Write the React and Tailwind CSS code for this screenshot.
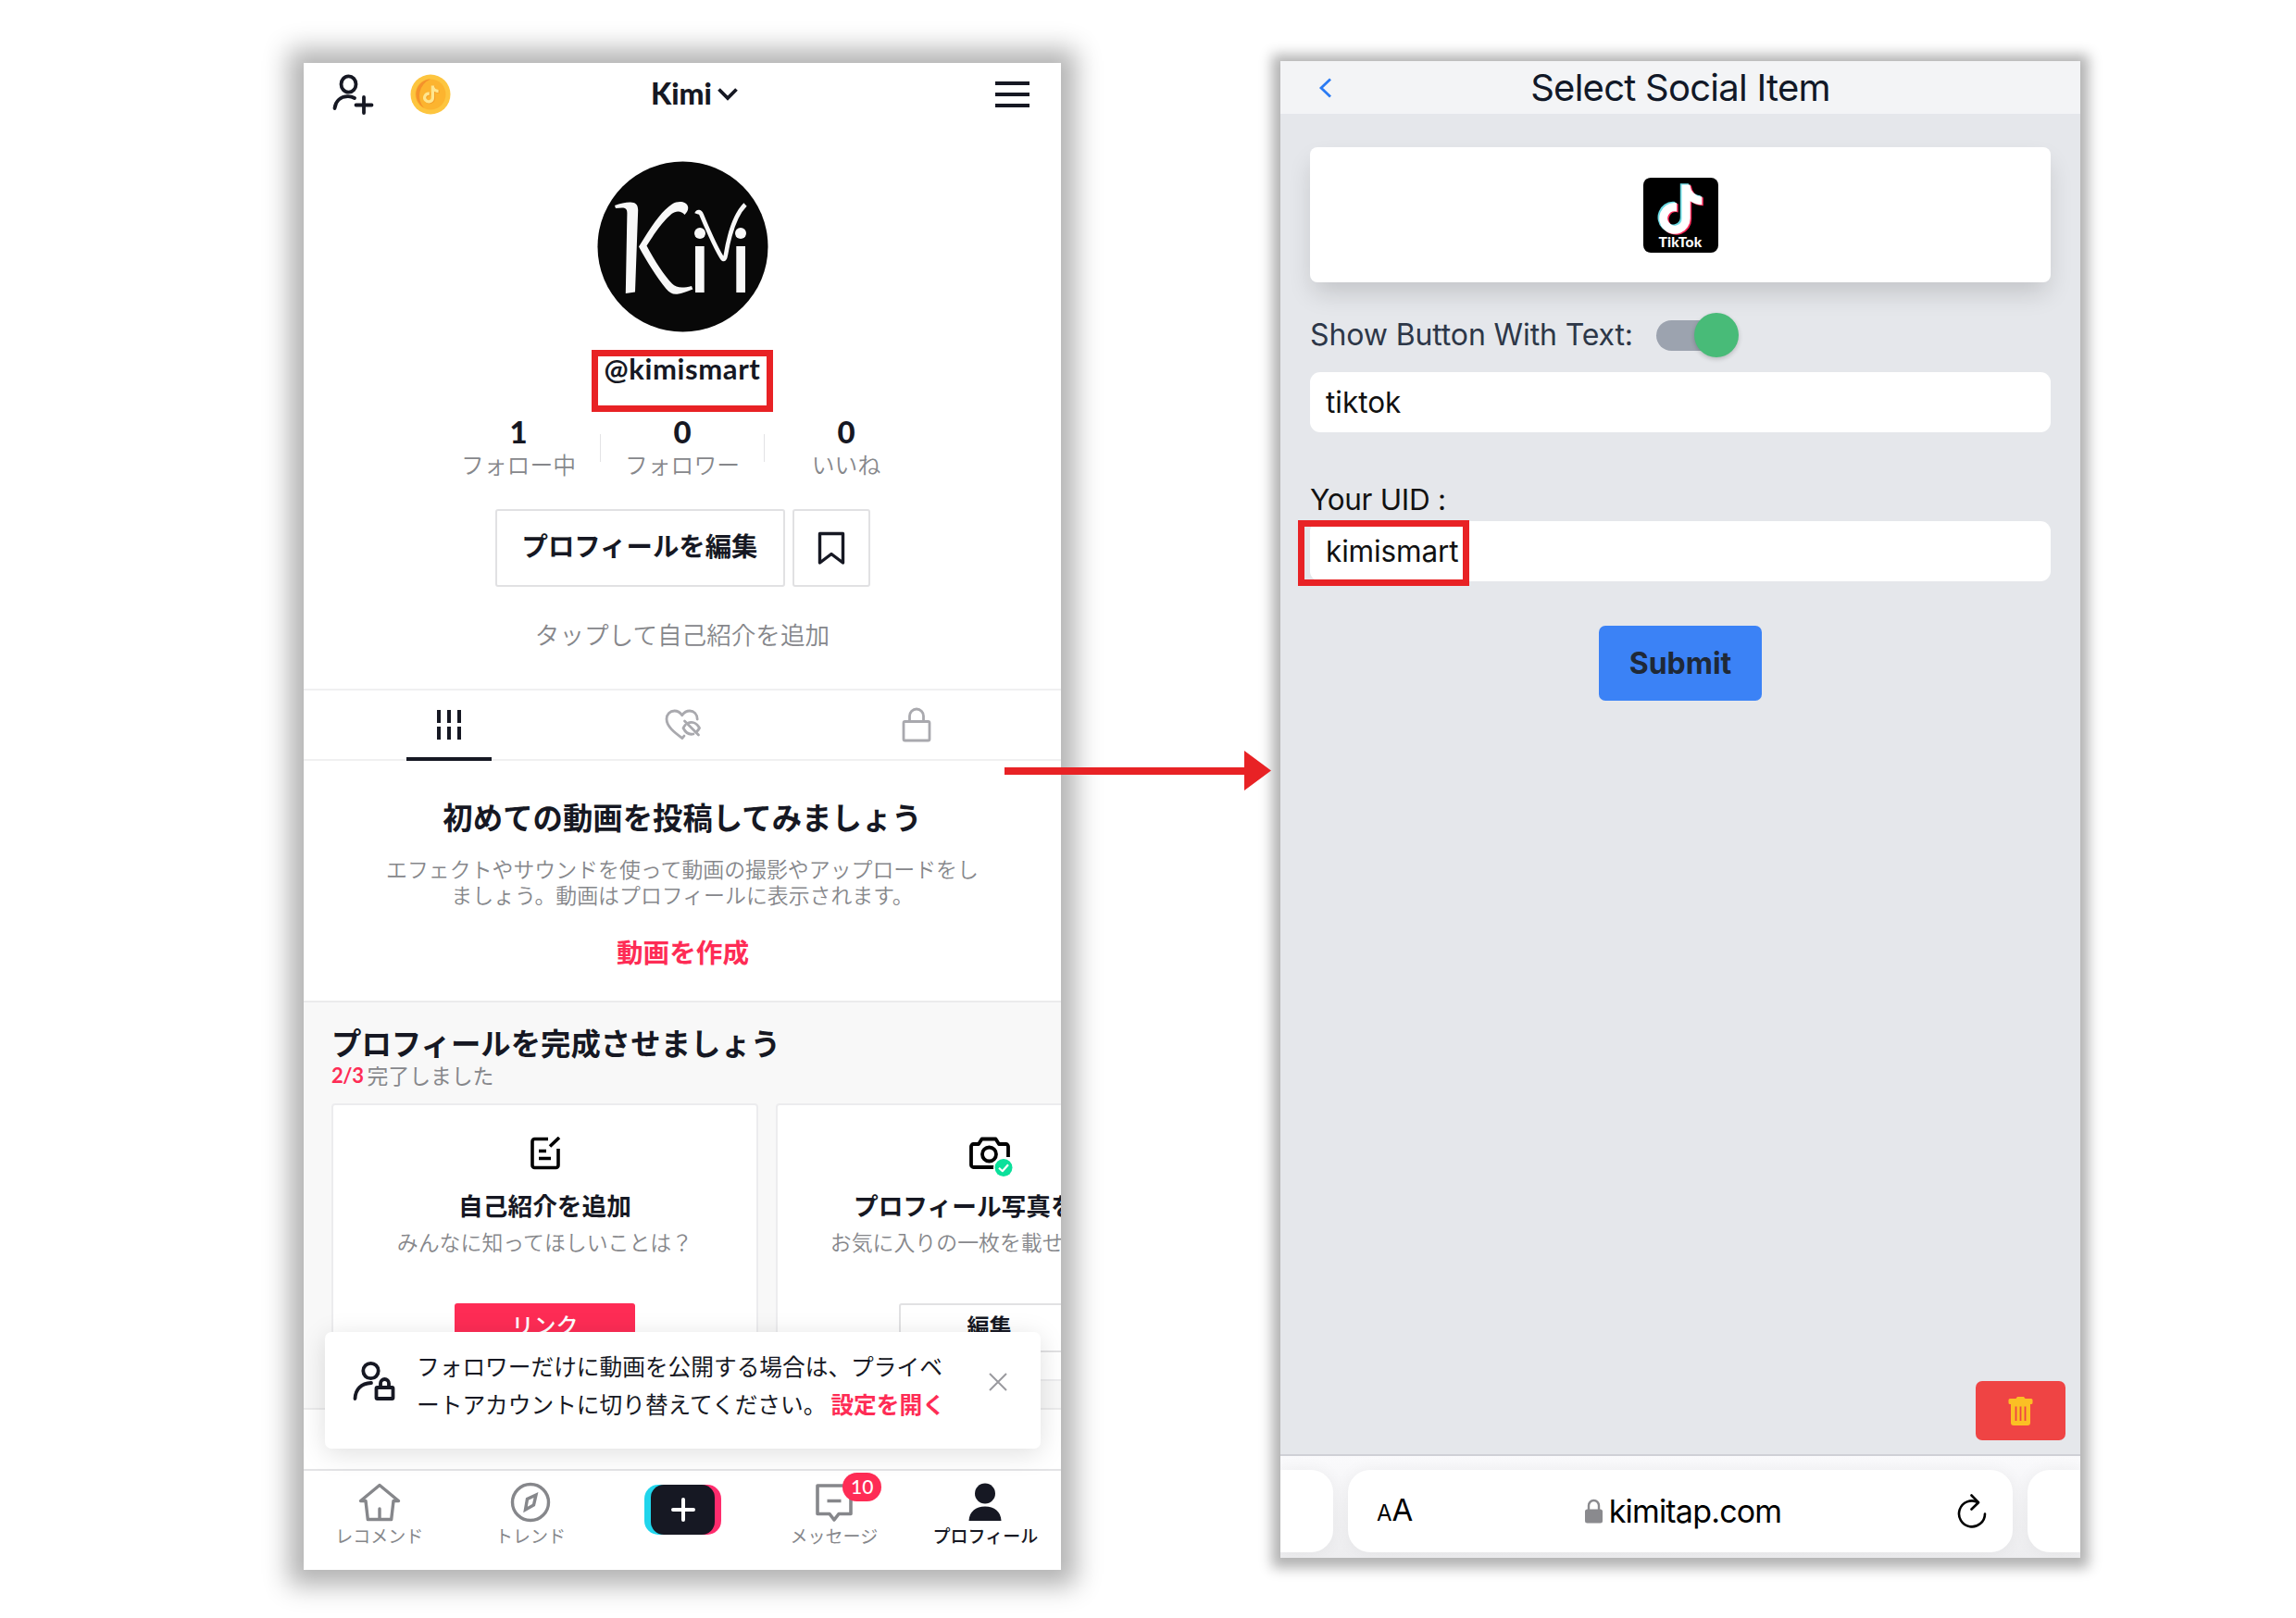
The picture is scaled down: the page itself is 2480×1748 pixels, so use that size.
import React from "react";

const latin = "font-['Lato','Noto_Sans_CJK_JP',sans-serif]";
const ios = "font-['Inter','Liberation_Sans',sans-serif]";

const NOTE =
  "M19.59 6.69a4.83 4.83 0 0 1-3.77-4.25V2h-3.45v13.67a2.89 2.89 0 0 1-5.2 1.74 2.89 2.89 0 0 1 2.31-4.64 2.93 2.93 0 0 1 .88.13V9.4a6.84 6.84 0 0 0-1-.05A6.33 6.33 0 0 0 5 20.1a6.34 6.34 0 0 0 10.86-4.43v-7a8.16 8.16 0 0 0 4.77 1.52v-3.4a4.85 4.85 0 0 1-1.04-.1z";

function AddFriendIcon() {
  return (
    <svg className="h-[44px] w-[46px]" viewBox="0 0 46 44" fill="none" stroke="#161823" strokeWidth="3.8" strokeLinecap="round">
      <ellipse cx="18.5" cy="11" rx="8" ry="8.6" />
      <path d="M3.5 37C4.5 29 10 24.500 17.500 24.200c2.800-.1 5.200.5 7.500 1.800" />
      <path d="M35 25v17M26.500 33.500h17" />
    </svg>
  );
}

function CoinIcon() {
  return (
    <svg className="h-[44px] w-[44px]" viewBox="0 0 44 44">
      <circle cx="22" cy="22" r="21.500" fill="#fdc53f" />
      <circle cx="22" cy="22" r="16.500" fill="#fcb42f" />
      <path d="M15 36.500A16.500 16.500 0 0 1 22 5.500A19.500 19.500 0 0 0 15 36.500z" fill="#f4922b" />
      <g transform="translate(11 10.500) scale(.95)">
        <path d={NOTE} fill="#f39a25" transform="translate(.9 .7)" />
        <path d={NOTE} fill="#fee68f" />
      </g>
    </svg>
  );
}

function AvatarLogo() {
  return (
    <svg className="h-[185px] w-[185px]" viewBox="5 14 185 185">
      <circle cx="97.500" cy="106.500" r="92" fill="#080808" />
      <g fill="#f8f8f8">
        <path d="M24 62c6-2.300 12-3.700 17-3.600 5 .1 8.200 2.200 8.200 8.600L46 155.500 35.800 157 37.400 70.500c.1-4.500-1.700-5.800-5.400-6L25 65z" />
        <path d="M50 106.500C62 87 74 68 86 60.500c7-4.300 15.500-2.700 17 2.500.9 3.200-.8 6.500-3.500 9-3.300-4.500-9.500-4.700-14-1-9.500 8-18.500 21-27 34.500C68 123 77 137 86 146.500c4.500 4.800 11.500 5 21 2.500l1.300 3.500c-6.300 2.500-11.500 4.700-16.800 5.300-5 .5-8.500-1.600-12-5.800C69 139 59 123 50 106.500z" />
        <circle cx="116" cy="92" r="6" />
        <circle cx="160" cy="92" r="6" />
        <path d="M111 106h9.700v50H111zM155.300 106h9.700v50h-9.700z" />
      </g>
      <path d="M112.500 71c1-3 4-2.500 5.200 1C124 87 132 106 139.500 118c2.500 4 3.800 1.500 4.500-3C147 97 153 73 165 61" fill="none" stroke="#f8f8f8" strokeWidth="4.600" />
    </svg>
  );
}

function HeartHiddenIcon() {
  return (
    <svg className="h-[34px] w-[40px]" viewBox="0 0 40 34" fill="none" stroke="#a9a9ae" strokeWidth="2.800" strokeLinecap="round" strokeLinejoin="round">
      <path d="M21 29l-2 2.500C10 25 2 18.500 2 10.800 2 5.500 5.700 2 10.500 2c3.500 0 6 1.500 8.200 4.800C21 3.500 23.800 2 27 2c4.500 0 8 3.400 8.200 9" />
      <path d="M24.500 15.500c5-2.500 10-.5 13 5-1 2-2.200 3.500-3.700 4.500M31 27c-4.500 1-8.500-1.500-11-6.500.6-1.300 1.300-2.400 2.200-3.300" />
      <path d="M21.500 13l15 15" />
    </svg>
  );
}

function NavItem({ label, children, active }) {
  return (
    <div className="relative flex flex-1 flex-col items-center">
      <div className="mt-[12px] flex h-[44px] items-center justify-center">{children}</div>
      <div
        className={
          active
            ? "h-[28px] whitespace-nowrap text-[19px] font-medium leading-[28px] text-[#161823]"
            : "h-[28px] whitespace-nowrap text-[19px] leading-[28px] text-[#86878b]"
        }
      >
        {label}
      </div>
    </div>
  );
}

function Stat({ value, label }) {
  return (
    <div className="flex w-[176px] flex-col items-center">
      <div className={`h-[36px] text-[33px] font-black leading-[35px] text-[#161823] ${latin}`}>{value}</div>
      <div className="h-[34px] whitespace-nowrap text-[24.800px] font-[350] leading-[32px] text-[#86878b]">{label}</div>
    </div>
  );
}

function ProfileScreen() {
  return (
    <div className="relative mt-[68px] flex h-[1628px] w-[818px] flex-col bg-white font-['Noto_Sans_CJK_JP',sans-serif] text-[#161823] shadow-[0_1px_26px_16px_rgba(0,0,0,0.3)]">
      <div className="grid h-[68px] grid-cols-3 items-center">
        <div className="flex items-center gap-[39px] pl-[30px]">
          <AddFriendIcon />
          <CoinIcon />
        </div>
        <div className="flex items-center justify-center gap-[6px] pl-[26px]">
          <span className={`-mt-[3px] text-[32px] font-black leading-[36px] ${latin}`}>Kimi</span>
          <svg className="h-[14px] w-[22px]" viewBox="0 0 22 14" fill="none" stroke="#161823" strokeWidth="3.800">
            <path d="M1.500 1.500L11 11l9.500-9.500" />
          </svg>
        </div>
        <div className="flex justify-end pr-[34px]">
          <div className="flex w-[37px] flex-col gap-[8px]">
            <div className="h-[4px] bg-[#161823]" />
            <div className="h-[4px] bg-[#161823]" />
            <div className="h-[4px] bg-[#161823]" />
          </div>
        </div>
      </div>

      <div className="mt-[38px] flex h-[185px] justify-center">
        <AvatarLogo />
      </div>

      <div className="mx-auto mt-[19px] flex h-[67px] w-[196px] justify-center border-[7px] border-[#e82225]">
        <div className={`h-[30px] text-[31px] font-bold leading-[26px] tracking-[0.6px] ${latin}`}>@kimismart</div>
      </div>

      <div className="mt-[4px] flex h-[71px] justify-center">
        <Stat value="1" label="フォロー中" />
        <div className="mt-[20px] h-[30px] w-px bg-[#e3e3e5]" />
        <Stat value="0" label="フォロワー" />
        <div className="mt-[20px] h-[30px] w-px bg-[#e3e3e5]" />
        <Stat value="0" label="いいね" />
      </div>

      <div className="mt-[30px] flex h-[84px] justify-center gap-[8px]">
        <div className="flex w-[313px] items-center justify-center whitespace-nowrap rounded-[3px] border-2 border-[#e1e1e3] pb-[6px] text-[28.400px] font-bold">
          プロフィールを編集
        </div>
        <div className="flex w-[84px] items-center justify-center rounded-[3px] border-2 border-[#e1e1e3]">
          <svg className="h-[37px] w-[30px]" viewBox="0 0 30 37" fill="none" stroke="#161823" strokeWidth="3.400" strokeLinejoin="round">
            <path d="M2.500 2.500h25v31.500L15 24.500 2.500 34z" />
          </svg>
        </div>
      </div>

      <div className="mt-[31px] h-[40px] text-center text-[26.600px] font-[350] leading-[40px] text-[#86878b]">タップして自己紹介を追加</div>

      <div className="mt-[39px] flex h-[78px] justify-between border-y-2 border-[#f0f0f1] pl-[111px] pr-[110px]">
        <div className="-mb-[2px] flex w-[92px] justify-center border-b-[4px] border-[#161823]">
          <svg className="mt-[20px] h-[34px] w-[30px]" viewBox="0 0 30 34" stroke="#161823" strokeWidth="4">
            <path d="M4 1v14M15 1v14M26 1v14M4 19v14M15 19v14M26 19v14" />
          </svg>
        </div>
        <div className="flex w-[92px] justify-center pt-[20px]">
          <HeartHiddenIcon />
        </div>
        <div className="flex w-[92px] justify-center pt-[18px]">
          <svg className="h-[38px] w-[32px]" viewBox="0 0 32 38" fill="none" stroke="#a9a9ae" strokeWidth="2.800">
            <rect x="2" y="15.500" width="28" height="20.500" rx="1.500" />
            <path d="M8.500 15V9.500a7.500 7.500 0 0 1 15 0V15" />
          </svg>
        </div>
      </div>

      <div className="mt-[35px] h-[50px] text-center text-[32.400px] font-bold leading-[50px]">初めての動画を投稿してみましょう</div>
      <div className="mt-[17px] text-center text-[22.900px] font-[350] leading-[28px] text-[#86878b]">
        エフェクトやサウンドを使って動画の撮影やアップロードをし
        <br />
        ましょう。動画はプロフィールに表示されます。
      </div>
      <div className="mt-[28px] h-[40px] pl-[1px] text-center text-[28.600px] font-bold leading-[40px] text-[#fe2c55]">動画を作成</div>

      <div className="mt-[33px] h-[442px] overflow-hidden border-y-2 border-[#ebebec] bg-[#f8f8f8] pl-[30px] pt-[23px]">
        <div className="h-[40px] text-[32.400px] font-bold leading-[40px]">プロフィールを完成させましょう</div>
        <div className="mt-[3px] flex h-[26px] gap-[4px] text-[22.800px] leading-[26px]">
          <span className={`text-[22px] font-bold tracking-[-0.4px] text-[#fe2c55] ${latin}`}>2/3</span>
          <span className="text-[#86878b]">完了しました</span>
        </div>
        <div className="mt-[17px] flex h-[300px] w-[941px] gap-[19px]">
          <div className="flex w-[461px] flex-col items-center rounded-[4px] border-2 border-[#ececee] bg-white pt-[34px]">
            <svg className="h-[36px] w-[34px]" viewBox="0 0 34 36" fill="none" stroke="#000" strokeWidth="3.600" strokeLinejoin="round">
              <path d="M20 2.500H5.500a2.500 2.500 0 0 0-2.500 2.500v26a2.500 2.500 0 0 0 2.500 2.500h23A2.500 2.500 0 0 0 31 31V13" />
              <path d="M22 10.500L32 1M10 15.500h8M10 23.500h13" />
            </svg>
            <div className="mt-[20px] h-[36px] text-[26.700px] font-bold leading-[36px]">自己紹介を追加</div>
            <div className="mt-[6px] h-[30px] whitespace-nowrap text-[22.900px] font-[350] leading-[30px] text-[#86878b]">みんなに知ってほしいことは？</div>
            <div className="mt-[52px] h-[53px] w-[195px] rounded-[3px] bg-[#fe2c55] text-center text-[24px] font-medium leading-[46px] text-white">リンク</div>
          </div>
          <div className="flex w-[461px] flex-col items-center rounded-[4px] border-2 border-[#ececee] bg-white pt-[34px]">
            <div className="h-[36px]">
              <svg className="h-[44px] w-[50px]" viewBox="0 0 50 44" fill="none" stroke="#000" strokeWidth="3.800" strokeLinejoin="round">
                <path d="M38 33H7.500A2.500 2.500 0 0 1 5 30.500V10.500A2.500 2.500 0 0 1 7.500 8H13l3.500-5.500h15L35 8h7.500a2.500 2.500 0 0 1 2.500 2.500V22" />
                <circle cx="24.500" cy="19" r="7.500" />
                <circle cx="40" cy="33.500" r="11" fill="#fff" stroke="none" />
                <circle cx="40" cy="33.500" r="9.500" fill="#0be09b" stroke="none" />
                <path d="M35 33.800l3.800 3.400 6.200-7" stroke="#fff" strokeWidth="2.200" />
              </svg>
            </div>
            <div className="mt-[20px] h-[36px] whitespace-nowrap text-[26.700px] font-bold leading-[36px]">プロフィール写真を追加</div>
            <div className="mt-[6px] h-[30px] whitespace-nowrap text-[22.900px] font-[350] leading-[30px] text-[#86878b]">お気に入りの一枚を載せましょう</div>
            <div className="mt-[52px] h-[53px] w-[195px] rounded-[3px] border-2 border-[#e1e1e3] text-center text-[24px] font-bold leading-[43px]">編集</div>
          </div>
        </div>
      </div>

      <div className="mt-auto flex h-[109px] border-t-2 border-[#e3e3e5]">
        <NavItem label="レコメンド">
          <svg className="h-[42px] w-[46px]" viewBox="0 0 46 42" fill="none" stroke="#86878b" strokeWidth="3.400" strokeLinejoin="round" strokeLinecap="round">
            <path d="M23 2.500L2.500 19.500H8l2.300 20h25.400L38 19.500h5.500z" />
            <path d="M23 28v11" />
          </svg>
        </NavItem>
        <NavItem label="トレンド">
          <svg className="h-[44px] w-[44px]" viewBox="0 0 44 44" fill="none" stroke="#86878b" strokeWidth="3.400">
            <circle cx="22" cy="22" r="19.500" />
            <path d="M28 14L18.500 18.500 16.500 30 25.500 25z" strokeWidth="3.400" />
          </svg>
        </NavItem>
        <div className="flex flex-1 justify-center pl-[1px]">
          <div className="mt-[15px] flex h-[54px] w-[83px] justify-center rounded-[15px] bg-[linear-gradient(90deg,#20d5ec_25%,#fe2c6d_75%)]">
            <div className="flex h-[54px] w-[69px] items-center justify-center rounded-[14px] bg-[#161823]">
              <svg className="h-[26px] w-[26px]" viewBox="0 0 26 26" stroke="#fff" strokeWidth="4" strokeLinecap="round">
                <path d="M13 2v22M2 13h22" />
              </svg>
            </div>
          </div>
        </div>
        <NavItem label="メッセージ">
          <svg className="h-[42px] w-[40px]" viewBox="0 0 40 42" fill="none" stroke="#86878b" strokeWidth="3.600" strokeLinejoin="round">
            <path d="M2 3h36v30.500H25L20 40l-5-6.500H2zM12.500 19.500h15" />
          </svg>
          <div className={`absolute left-[91px] top-[2px] h-[31px] w-[42px] rounded-full bg-[#fe2c55] text-center text-[21px] font-medium leading-[30px] text-white ${latin}`}>10</div>
        </NavItem>
        <NavItem label="プロフィール" active>
          <svg className="h-[42px] w-[36px]" viewBox="0 0 36 42" fill="#161823">
            <ellipse cx="18" cy="11.500" rx="11" ry="11" />
            <path d="M0.500 41C1 31 8 25.500 18 25.500S35 31 35.500 41z" />
          </svg>
        </NavItem>
      </div>

      <div className="absolute left-[23px] top-[1371px] flex h-[126px] w-[773px] rounded-[7px] bg-white shadow-[0_5px_28px_rgba(0,0,0,0.13)]">
        <svg className="ml-[30px] mt-[31px] h-[44px] w-[46px]" viewBox="0 0 46 44" fill="none" stroke="#161823" strokeWidth="3.800" strokeLinecap="round" strokeLinejoin="round">
          <circle cx="19.500" cy="11" r="8.200" />
          <path d="M2.500 41C3 31 9 24.500 20 24" />
          <rect x="25.500" y="29" width="18" height="12" rx="1" />
          <path d="M30 28v-3.500a4.500 4.500 0 0 1 9 0V28" />
        </svg>
        <div className="ml-[23px] mt-[16px] w-[592px] whitespace-nowrap text-[24.700px] leading-[41px]">
          フォロワーだけに動画を公開する場合は、プライベ
          <br />
          ートアカウントに切り替えてください。<span className="ml-[5px] text-[24.700px] font-bold text-[#fe2c55]">設定を開く</span>
        </div>
        <svg className="ml-[26px] mt-[44px] h-[20px] w-[20px]" viewBox="0 0 20 20" stroke="#9a9a9f" strokeWidth="2">
          <path d="M1 1l18 18M19 1L1 19" />
        </svg>
      </div>
    </div>
  );
}

function SocialItemScreen() {
  return (
    <div className={`mt-[66px] flex h-[1617px] w-[864px] flex-col overflow-hidden bg-[#e5e7eb] shadow-[0_2px_13px_9px_rgba(0,0,0,0.3)] ${ios}`}>
      <div className="grid h-[57px] grid-cols-[1fr_auto_1fr] items-center bg-[#f3f4f6]">
        <svg className="ml-[41px] h-[22px] w-[15px]" viewBox="0 0 15 22" fill="none" stroke="#2b7bf3" strokeWidth="2.800">
          <path d="M13 1.500L3 11l10 9.500" />
        </svg>
        <div className="text-[40px] leading-[44px] tracking-[-0.75px] text-[#111827]">Select Social Item</div>
        <div />
      </div>

      <div className="flex flex-col px-[32px] pt-[36px]">
        <div className="flex h-[146px] items-center justify-center rounded-[8px] bg-white shadow-[0_14px_28px_-4px_rgba(0,0,0,0.16)]">
          <div className="flex h-[81px] w-[81px] flex-col items-center rounded-[8px] bg-black">
            <svg className="mt-[6px] h-[56px] w-[50px]" viewBox="3 1.900 18.900 21" preserveAspectRatio="none">
              <path d={NOTE} fill="#fe2858" transform="translate(1.200 .8)" />
              <path d={NOTE} fill="#69d9e2" />
              <path d={NOTE} fill="#fff" transform="translate(.65 .45)" />
            </svg>
            <div className="font-['Lato',sans-serif] text-[15.500px] font-black leading-[15px] tracking-[0.3px] text-white">TikTok</div>
          </div>
        </div>

        <div className="mt-[33px] flex h-[48px] items-center">
          <div className="text-[32px] leading-[40px] tracking-[-0.12px] text-[#2d3748]">Show Button With Text:</div>
          <div className="relative ml-[25px] h-[33px] w-[80px] rounded-full bg-[#9ca3af]">
            <div className="absolute -right-[9px] -top-[8px] h-[48px] w-[48px] rounded-full bg-[#48bb78] shadow-[0_2px_5px_rgba(0,0,0,0.2)]" />
          </div>
        </div>

        <div className="mt-[16px] h-[65px] rounded-[11px] bg-white pl-[17px] text-[31.500px] leading-[65px] text-[#111]">tiktok</div>
        <div className="mt-[53px] h-[40px] text-[31.500px] leading-[40px] tracking-[-0.3px] text-[#111]">Your UID :</div>
        <div className="relative mt-[3px] h-[65px] rounded-[11px] bg-white pl-[17px] text-[31.500px] leading-[66px] tracking-[-0.15px] text-[#111]">
          kimismart
          <div className="absolute -left-[13px] -top-[1px] h-[71px] w-[185px] border-[7px] border-[#e82225]" />
        </div>
        <div className="mx-auto mt-[48px] h-[81px] w-[176px] rounded-[7px] bg-[#3b82f6] text-center text-[32px] font-bold leading-[82px] text-[#1f2937]">
          Submit
        </div>
      </div>

      <div className="mb-[15px] ml-auto mr-[16px] mt-auto flex h-[64px] w-[97px] items-center justify-center rounded-[7px] bg-[#ef4444]">
        <svg className="h-[31px] w-[27px]" viewBox="0 0 27 31">
          <path fill="#fbbf24" d="M10 0h7l1.500 2H25a1.500 1.500 0 0 1 1.500 1.500v3A1.500 1.500 0 0 1 25 8h-1v20a3 3 0 0 1-3 3H6a3 3 0 0 1-3-3V8H2A1.500 1.500 0 0 1 .5 6.500v-3A1.500 1.500 0 0 1 2 2h6.500z" />
          <path stroke="#ef4444" strokeWidth="1.800" d="M8.500 10.500v15.500M13.500 10.500v15.500M18.500 10.500v15.500" />
        </svg>
      </div>

      <div className="flex h-[112px] gap-[16px] border-t-2 border-[#cfd0d6] bg-linear-to-b from-[#fafafc] to-[#ededef] pt-[15px]">
        <div className="h-[89px] w-[57px] rounded-r-[24px] bg-white shadow-[0_0_18px_rgba(0,0,0,0.05)]" />
        <div className="grid h-[89px] w-[718px] grid-cols-[1fr_auto_1fr] items-center rounded-[24px] bg-white text-black shadow-[0_0_18px_rgba(0,0,0,0.05)]">
          <div className="flex items-baseline pl-[31px] leading-[36px]">
            <span className="text-[24px]">A</span>
            <span className="text-[33px]">A</span>
          </div>
          <div className="flex items-center gap-[7px] pl-[6px]">
            <svg className="h-[27px] w-[19px]" viewBox="0 0 19 27" fill="none">
              <rect x="0" y="11.500" width="19" height="15" rx="2.500" fill="#8a8a8e" />
              <path d="M4 12V7.500a5.500 5.500 0 0 1 11 0V12" stroke="#8a8a8e" strokeWidth="2.400" />
            </svg>
            <div className="text-[34px] leading-[44px] tracking-[-0.8px]">kimitap.com</div>
          </div>
          <div className="flex justify-end pr-[28px]">
            <svg className="h-[37px] w-[32px]" viewBox="0 0 32 37" fill="none" stroke="#000" strokeWidth="2.600" strokeLinecap="round" strokeLinejoin="round">
              <path d="M30 21.500A14 14 0 1 1 22.500 9" />
              <path d="M15.500 1.500l7.500 7.700-7.500 7.300" />
            </svg>
          </div>
        </div>
        <div className="h-[89px] w-[57px] rounded-l-[24px] bg-white shadow-[0_0_18px_rgba(0,0,0,0.05)]" />
      </div>
    </div>
  );
}

export default function App() {
  return (
    <div className="relative flex h-[1748px] w-[2480px] items-start gap-[237px] overflow-hidden bg-white pl-[328px]">
      <ProfileScreen />
      <SocialItemScreen />
      <svg className="absolute left-[1085px] top-[811px] h-[43px] w-[289px]" viewBox="0 0 289 43" fill="#e82225">
        <path d="M0 18h259V0l29 21.500L259 43V26H0z" />
      </svg>
    </div>
  );
}
